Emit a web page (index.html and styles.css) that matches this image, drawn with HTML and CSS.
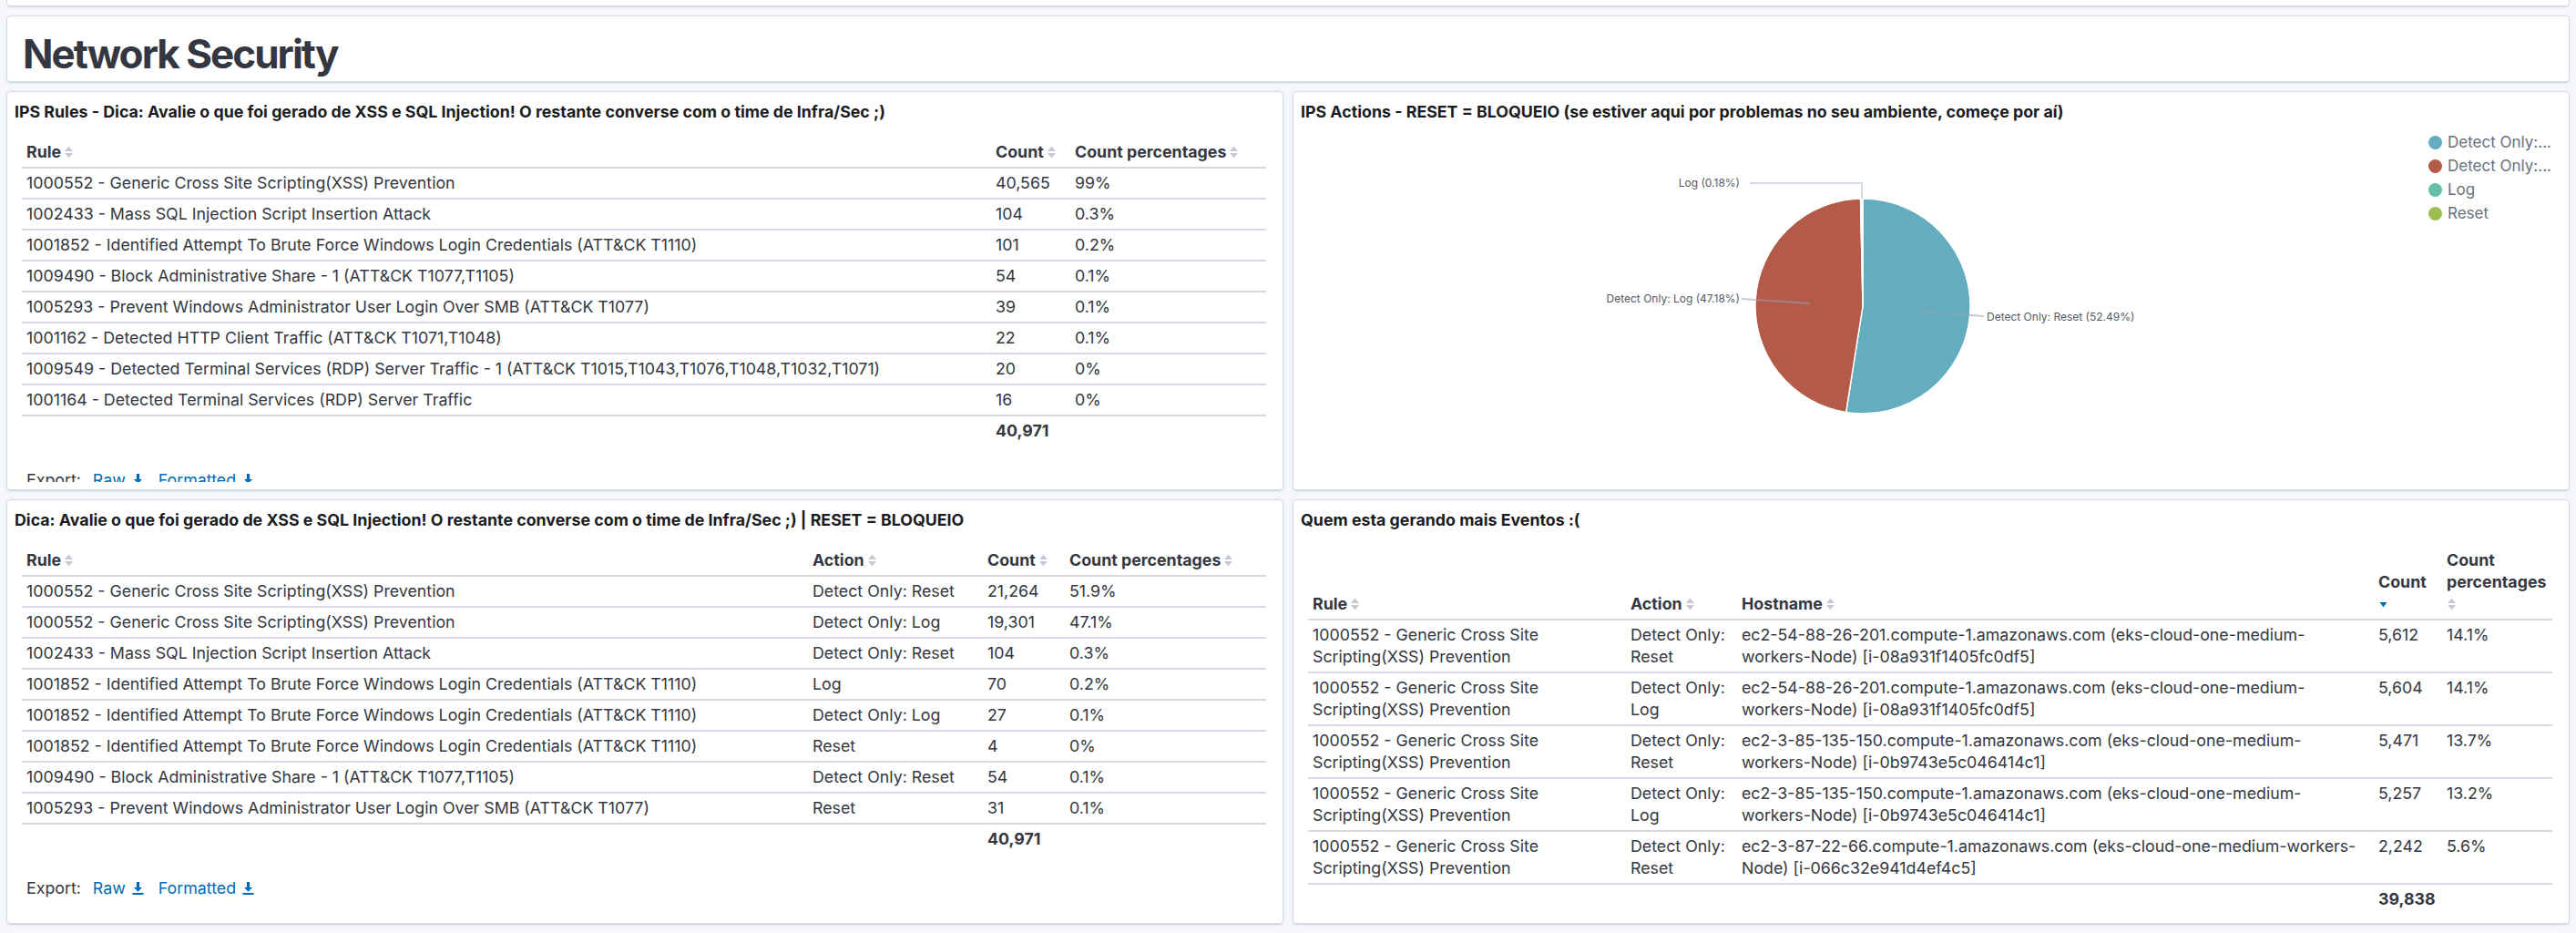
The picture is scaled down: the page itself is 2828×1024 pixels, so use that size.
FILE: index.html
```html
<!DOCTYPE html>
<html lang="pt">
<head>
<meta charset="utf-8">
<title>Network Security</title>
<link rel="stylesheet" href="styles.css">
</head>
<body>
<svg width="0" height="0" class="defs">
  <defs>
    <symbol id="sort" viewBox="0 0 11 14"><path d="M1 6h9L5.5 0.5z" /><path d="M1 8h9l-4.5 5.5z" /></symbol>
    <symbol id="sortdown" viewBox="0 0 11 14"><path d="M1.5 5h8l-4 5.5z" /></symbol>
    <symbol id="dl" viewBox="0 0 14 15"><path d="M5.3 0h3.4v6.5h3.1L7 11.6 2.2 6.5h3.1z"/><rect x="0.5" y="12.8" width="13" height="2.2"/></symbol>
  </defs>
</svg>
<div class="dash">
  <div class="stub"></div>
  <div class="panel title-panel"><h1>Network Security</h1></div>
  <div class="grid">
    <section class="panel">
      <h2 class="ptitle">IPS Rules - Dica: Avalie o que foi gerado de XSS e SQL Injection! O restante converse com o time de Infra/Sec ;)</h2>
      <div class="vis">
        <table class="tbl">
          <colgroup><col class="c-rule1"><col class="c-cnt1"><col></colgroup>
          <thead><tr><th>Rule<svg class="si"><use href="#sort"/></svg></th><th>Count<svg class="si"><use href="#sort"/></svg></th><th>Count percentages<svg class="si"><use href="#sort"/></svg></th></tr></thead>
          <tbody>
            <tr><td>1000552 - Generic Cross Site Scripting(XSS) Prevention</td><td>40,565</td><td>99%</td></tr>
            <tr><td>1002433 - Mass SQL Injection Script Insertion Attack</td><td>104</td><td>0.3%</td></tr>
            <tr><td>1001852 - Identified Attempt To Brute Force Windows Login Credentials (ATT&amp;CK T1110)</td><td>101</td><td>0.2%</td></tr>
            <tr><td>1009490 - Block Administrative Share - 1 (ATT&amp;CK T1077,T1105)</td><td>54</td><td>0.1%</td></tr>
            <tr><td>1005293 - Prevent Windows Administrator User Login Over SMB (ATT&amp;CK T1077)</td><td>39</td><td>0.1%</td></tr>
            <tr><td>1001162 - Detected HTTP Client Traffic (ATT&amp;CK T1071,T1048)</td><td>22</td><td>0.1%</td></tr>
            <tr><td>1009549 - Detected Terminal Services (RDP) Server Traffic - 1 (ATT&amp;CK T1015,T1043,T1076,T1048,T1032,T1071)</td><td>20</td><td>0%</td></tr>
            <tr><td>1001164 - Detected Terminal Services (RDP) Server Traffic</td><td>16</td><td>0%</td></tr>
          </tbody>
          <tfoot><tr><td></td><td>40,971</td><td></td></tr></tfoot>
        </table>
        <div class="export">Export: <a>Raw<svg class="di"><use href="#dl"/></svg></a><a>Formatted<svg class="di"><use href="#dl"/></svg></a></div>
      </div>
    </section>

    <section class="panel">
      <h2 class="ptitle">IPS Actions - RESET = BLOQUEIO (se estiver aqui por problemas no seu ambiente, começe por aí)</h2>
      <div class="chart">
        <svg class="pie" width="1238" height="390" viewBox="0 0 1238 390">
          <g stroke="#fff" stroke-width="1.5" stroke-linejoin="round">
            <path fill="#63adbf" d="M617 201 L617 83 A118 118 0 1 1 598.63 317.56 Z"/>
            <path fill="#b35a48" d="M617 201 L598.63 317.56 A118 118 0 0 1 614.55 83.02 Z"/>
            <path fill="#65bfa8" d="M617 201 L614.55 83.02 A118 118 0 0 1 615.89 83 Z"/>
            <path fill="#9dbd50" d="M617 201 L615.89 83 A118 118 0 0 1 617 83 Z"/>
          </g>
          <g fill="none" stroke="#d3dae6" stroke-width="2">
            <path d="M493 66 H616 V83"/>
          </g>
          <g fill="none" stroke-width="2" stroke-opacity="0.55" stroke="#98a2b3">
            <path d="M484 193 L559 198"/>
            <path d="M678 207 L750 212"/>
          </g>
          <g class="lbl">
            <text x="482" y="70" text-anchor="end">Log (0.18%)</text>
            <text x="482" y="197" text-anchor="end">Detect Only: Log (47.18%)</text>
            <text x="753" y="217">Detect Only: Reset (52.49%)</text>
          </g>
        </svg>
        <ul class="legend">
          <li><span class="dot d1"></span>Detect Only:...</li>
          <li><span class="dot d2"></span>Detect Only:...</li>
          <li><span class="dot d3"></span>Log</li>
          <li><span class="dot d4"></span>Reset</li>
        </ul>
      </div>
    </section>

    <section class="panel">
      <h2 class="ptitle">Dica: Avalie o que foi gerado de XSS e SQL Injection! O restante converse com o time de Infra/Sec ;) | RESET = BLOQUEIO</h2>
      <div class="vis">
        <table class="tbl">
          <colgroup><col class="c-rule3"><col class="c-act3"><col class="c-cnt3"><col></colgroup>
          <thead><tr><th>Rule<svg class="si"><use href="#sort"/></svg></th><th>Action<svg class="si"><use href="#sort"/></svg></th><th>Count<svg class="si"><use href="#sort"/></svg></th><th>Count percentages<svg class="si"><use href="#sort"/></svg></th></tr></thead>
          <tbody>
            <tr><td>1000552 - Generic Cross Site Scripting(XSS) Prevention</td><td>Detect Only: Reset</td><td>21,264</td><td>51.9%</td></tr>
            <tr><td>1000552 - Generic Cross Site Scripting(XSS) Prevention</td><td>Detect Only: Log</td><td>19,301</td><td>47.1%</td></tr>
            <tr><td>1002433 - Mass SQL Injection Script Insertion Attack</td><td>Detect Only: Reset</td><td>104</td><td>0.3%</td></tr>
            <tr><td>1001852 - Identified Attempt To Brute Force Windows Login Credentials (ATT&amp;CK T1110)</td><td>Log</td><td>70</td><td>0.2%</td></tr>
            <tr><td>1001852 - Identified Attempt To Brute Force Windows Login Credentials (ATT&amp;CK T1110)</td><td>Detect Only: Log</td><td>27</td><td>0.1%</td></tr>
            <tr><td>1001852 - Identified Attempt To Brute Force Windows Login Credentials (ATT&amp;CK T1110)</td><td>Reset</td><td>4</td><td>0%</td></tr>
            <tr><td>1009490 - Block Administrative Share - 1 (ATT&amp;CK T1077,T1105)</td><td>Detect Only: Reset</td><td>54</td><td>0.1%</td></tr>
            <tr><td>1005293 - Prevent Windows Administrator User Login Over SMB (ATT&amp;CK T1077)</td><td>Reset</td><td>31</td><td>0.1%</td></tr>
          </tbody>
          <tfoot><tr><td></td><td></td><td>40,971</td><td></td></tr></tfoot>
        </table>
        <div class="export">Export: <a>Raw<svg class="di"><use href="#dl"/></svg></a><a>Formatted<svg class="di"><use href="#dl"/></svg></a></div>
      </div>
    </section>

    <section class="panel">
      <h2 class="ptitle">Quem esta gerando mais Eventos :(</h2>
      <div class="vis">
        <table class="tbl">
          <colgroup><col class="c-rule4"><col class="c-act4"><col class="c-host4"><col class="c-cnt4"><col></colgroup>
          <thead><tr><th>Rule<svg class="si"><use href="#sort"/></svg></th><th>Action<svg class="si"><use href="#sort"/></svg></th><th>Hostname<svg class="si"><use href="#sort"/></svg></th><th class="stack">Count<svg class="si active"><use href="#sortdown"/></svg></th><th class="stack">Count percentages<svg class="si"><use href="#sort"/></svg></th></tr></thead>
          <tbody>
            <tr><td>1000552 - Generic Cross Site Scripting(XSS) Prevention</td><td>Detect Only: Reset</td><td class="host">ec2-54-88-26-201.compute-1.amazonaws.com (eks-cloud-one-medium-<br>workers-Node) [i-08a931f1405fc0df5]</td><td>5,612</td><td>14.1%</td></tr>
            <tr><td>1000552 - Generic Cross Site Scripting(XSS) Prevention</td><td>Detect Only: Log</td><td class="host">ec2-54-88-26-201.compute-1.amazonaws.com (eks-cloud-one-medium-<br>workers-Node) [i-08a931f1405fc0df5]</td><td>5,604</td><td>14.1%</td></tr>
            <tr><td>1000552 - Generic Cross Site Scripting(XSS) Prevention</td><td>Detect Only: Reset</td><td class="host">ec2-3-85-135-150.compute-1.amazonaws.com (eks-cloud-one-medium-<br>workers-Node) [i-0b9743e5c046414c1]</td><td>5,471</td><td>13.7%</td></tr>
            <tr><td>1000552 - Generic Cross Site Scripting(XSS) Prevention</td><td>Detect Only: Log</td><td class="host">ec2-3-85-135-150.compute-1.amazonaws.com (eks-cloud-one-medium-<br>workers-Node) [i-0b9743e5c046414c1]</td><td>5,257</td><td>13.2%</td></tr>
            <tr><td>1000552 - Generic Cross Site Scripting(XSS) Prevention</td><td>Detect Only: Reset</td><td class="host">ec2-3-87-22-66.compute-1.amazonaws.com (eks-cloud-one-medium-workers-<br>Node) [i-066c32e941d4ef4c5]</td><td>2,242</td><td>5.6%</td></tr>
          </tbody>
          <tfoot><tr><td></td><td></td><td></td><td>39,838</td><td></td></tr></tfoot>
        </table>
      </div>
    </section>
  </div>
</div>
</body>
</html>
```
FILE: styles.css
```css
* { box-sizing: border-box; }
html, body { margin: 0; }
body {
  background: #f6f7fb;
  font-family: Inter, "Noto Sans", "Liberation Sans", sans-serif;
  color: #343741;
  width: 2828px;
  height: 1024px;
  overflow: hidden;
}
.defs { position: absolute; }
.dash {
  padding: 0 7px;
  display: flex;
  flex-direction: column;
  gap: 10px;
}
.panel {
  background: #fff;
  border: 1px solid #d3dae6;
  border-radius: 4px;
  box-shadow: 0 2px 2px -1px rgba(152, 162, 179, 0.35), 0 1px 5px -2px rgba(152, 162, 179, 0.35);
}
.stub {
  height: 7px;
  background: #fff;
  border: 1px solid #d3dae6;
  border-top: 0;
  border-radius: 0 0 4px 4px;
  box-shadow: 0 2px 2px -1px rgba(152, 162, 179, 0.35);
}
.title-panel {
  height: 73px;
  padding: 15px 17px 0;
}
.title-panel h1 {
  margin: 0;
  font-size: 44px;
  line-height: 53px;
  font-weight: 700;
  color: #343741;
  letter-spacing: -0.045em;
}
.grid {
  display: grid;
  grid-template-columns: 1fr 1fr;
  grid-template-rows: 438px 466px;
  gap: 10px;
}
.grid .panel {
  padding: 10px 8px 8px;
  display: flex;
  flex-direction: column;
  overflow: hidden;
  min-width: 0;
}
.ptitle {
  margin: 0;
  font-size: 17.8px;
  line-height: 24px;
  font-weight: 700;
  color: #1a1c21;
  white-space: nowrap;
}
.vis {
  flex: 1;
  min-height: 0;
  overflow: hidden;
  padding: 16px 10px 0 8px;
}
.tbl {
  width: 100%;
  table-layout: fixed;
  border-collapse: collapse;
  font-size: 17.8px;
  line-height: 24px;
}
.tbl th, .tbl td {
  padding: 4px 5px;
  text-align: left;
  vertical-align: top;
}
.tbl th {
  font-weight: 700;
  vertical-align: bottom;
  border-bottom: 2px solid #d3dae6;
}
.tbl tbody td { border-bottom: 2px solid #d3dae6; }
.tbl tfoot td { font-weight: 700; }
.si {
  width: 11px;
  height: 14px;
  fill: #c5cad4;
  vertical-align: -1px;
  margin-left: 3px;
}
.stack .si {
  display: block;
  margin: 5px 0;
}
.stack .si.active { fill: #006bb4; }
.c-rule1 { width: 1064px; }
.c-cnt1 { width: 87px; }
.c-rule3 { width: 863px; }
.c-act3 { width: 192px; }
.c-cnt3 { width: 90px; }
.c-rule4 { width: 349px; }
.c-act4 { width: 122px; }
.c-host4 { width: 699px; }
.c-cnt4 { width: 75px; }
.host { white-space: nowrap; }
.export {
  margin-top: 26px;
  padding-left: 5px;
  font-size: 17.8px;
  line-height: 24px;
  white-space: nowrap;
}
.export a {
  color: #006bb4;
  margin-left: 8px;
  margin-right: 8px;
}
.di {
  width: 13px;
  height: 14px;
  fill: #006bb4;
  margin-left: 7px;
  vertical-align: -1px;
}
.chart {
  flex: 1;
  display: flex;
  min-height: 0;
}
.pie { display: block; flex: none; }
.lbl text {
  font-size: 12px;
  fill: #535966;
  font-family: Inter, "Noto Sans", sans-serif;
}
.legend {
  list-style: none;
  margin: 8px 0 0;
  padding: 0;
  flex: 1;
  font-size: 17px;
  line-height: 26px;
  color: #69707d;
  white-space: nowrap;
}
.legend li { display: flex; align-items: center; }
.dot {
  width: 15px;
  height: 15px;
  border-radius: 50%;
  margin-right: 6px;
  flex: none;
}
.d1 { background: #63adbf; }
.d2 { background: #b35a48; }
.d3 { background: #65bfa8; }
.d4 { background: #9dbd50; }
```
